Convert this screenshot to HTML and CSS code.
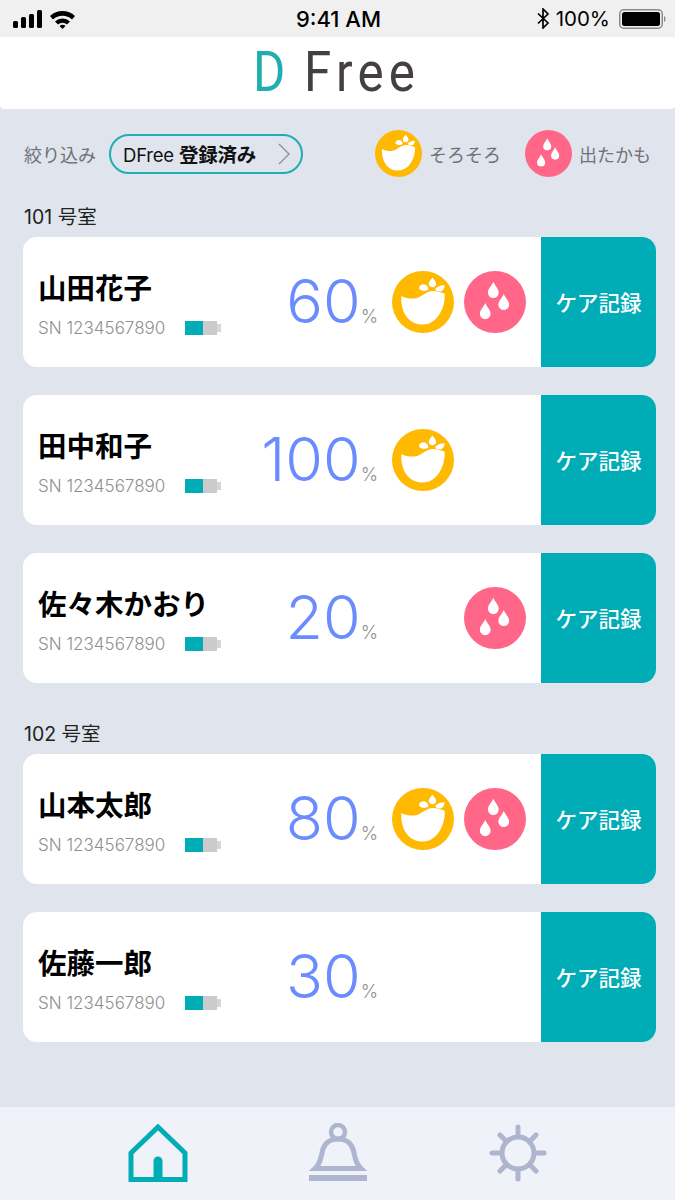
FILE: index.html
```html
<!DOCTYPE html>
<html lang="ja">
<head>
    <meta charset="utf-8">
    <title>DFree</title>
    <link rel="stylesheet" href="styles.css">
</head>
<body>

<svg class="defs" width="0" height="0">
    <symbol id="icon-soon" viewBox="-92 -92 184 184">
        <circle r="92" fill="#ffb900"/>
        <path fill="#fff" d="M-64,-18 C-50,-10 -35,-9 -21,-11 C-5,-14 10,-33 29,-33 C42,-33 54,-28 64,-25 C68,10 45,67 0,67 C-45,67 -68,25 -64,-18Z"/>
        <path fill="#fff" d="M28,-73 C33,-66 40,-60 39,-52 C37,-41 19,-41 17,-52 C16,-60 23,-66 28,-73Z"/>
        <path fill="#fff" d="M-12,-40 C-12,-50 -2,-54 6,-52 C12,-50 16,-44 16,-37 C10,-33 -4,-30 -12,-40Z"/>
        <path fill="#fff" d="M64,-50 C54,-50 40,-46 36,-38 C39,-32 50,-29 56,-33 C62,-37 64,-44 64,-50Z"/>
    </symbol>
    <symbol id="drop" viewBox="-17 -25 34 50">
        <path fill="#fff" d="M0,-24 C5,-12 16,-3 16,8 A16,16 0 0 1 -16,8 C-16,-3 -5,-12 0,-24Z"/>
    </symbol>
    <symbol id="icon-wet" viewBox="-92 -92 184 184">
        <circle r="92" fill="#ff6688"/>
        <use href="#drop" x="-22" y="-61" width="34" height="50"/>
        <use href="#drop" x="9" y="-25" width="34" height="50"/>
        <use href="#drop" x="-46" y="2" width="34" height="50"/>
    </symbol>
    <symbol id="battery" viewBox="0 0 36 14">
        <rect x="18" width="14" height="14" fill="#cbcbcb"/>
        <rect x="32" y="3" width="4" height="8" fill="#d6d6d6"/>
        <rect width="18" height="14" fill="#00acb6"/>
    </symbol>
</svg>

<div class="status-bar">
    <div class="status-left">
        <svg width="62" height="20" viewBox="0 0 62 20">
            <rect x="0" y="12" width="5" height="7" rx="1.5"/>
            <rect x="8" y="8" width="5" height="11" rx="1.5"/>
            <rect x="16" y="5" width="5" height="14" rx="1.5"/>
            <rect x="24" y="1" width="5" height="18" rx="1.5"/>
            <path d="M37,7 A18,18 0 0 1 62,7 L59,10.5 A14,14 0 0 0 40,10.5Z"/>
            <path d="M42,12.5 A11,11 0 0 1 57,12.5 L54,15.5 A7,7 0 0 0 45,15.5Z"/>
            <path d="M46.500,17 A4.500,4.500 0 0 1 52.500,17 L49.500,20Z"/>
        </svg>
    </div>
    <div class="status-time">9:41 AM</div>
    <div class="status-right">
        <svg width="13" height="21" viewBox="0 0 13 21" class="bt">
            <path d="M1,5.500 L11,15 L6,20 L6,1 L11,6 L1,15.500" fill="none" stroke="#000" stroke-width="1.700"/>
        </svg>
        <span class="status-pct">100%</span>
        <svg width="48" height="20" viewBox="0 0 48 20">
            <rect x="0.750" y="0.750" width="42.500" height="18.500" rx="4" fill="none" stroke="#8a8a8a" stroke-width="1.500"/>
            <rect x="3" y="3" width="38" height="14" rx="2.500" fill="#000"/>
            <path d="M45,7 C47,7.500 47,12.500 45,13Z" fill="#8a8a8a"/>
        </svg>
    </div>
</div>

<header class="app-header">
    <span class="logo-d">D</span>
    <span class="logo-free">Free</span>
</header>

<div class="filter-row">
    <span class="filter-label">絞り込み</span>
    <div class="filter-pill">
        <span>DFree <b>登録済み</b></span>
        <svg width="12" height="22" viewBox="0 0 12 22">
            <path d="M1,1 L11,11 L1,21" fill="none" stroke="#8d8d8d" stroke-width="1.300"/>
        </svg>
    </div>
    <div class="legend">
        <div class="legend-item">
            <svg class="legend-icon"><use href="#icon-soon"/></svg>
            <span>そろそろ</span>
        </div>
        <div class="legend-item">
            <svg class="legend-icon"><use href="#icon-wet"/></svg>
            <span>出たかも</span>
        </div>
    </div>
</div>

<main class="rooms">
    <section class="room">
        <h2>101 号室</h2>
        <div class="card">
            <div class="person">
                <div class="name">山田花子</div>
                <div class="serial">SN 1234567890 <svg class="batt"><use href="#battery"/></svg></div>
            </div>
            <div class="level"><span class="num">60</span><span class="unit">%</span></div>
            <div class="alerts">
                <svg class="alert"><use href="#icon-soon"/></svg>
                <svg class="alert"><use href="#icon-wet"/></svg>
            </div>
            <button class="care">ケア記録</button>
        </div>
        <div class="card">
            <div class="person">
                <div class="name">田中和子</div>
                <div class="serial">SN 1234567890 <svg class="batt"><use href="#battery"/></svg></div>
            </div>
            <div class="level"><span class="num">100</span><span class="unit">%</span></div>
            <div class="alerts">
                <svg class="alert"><use href="#icon-soon"/></svg>
                <div class="alert"></div>
            </div>
            <button class="care">ケア記録</button>
        </div>
        <div class="card">
            <div class="person">
                <div class="name">佐々木かおり</div>
                <div class="serial">SN 1234567890 <svg class="batt"><use href="#battery"/></svg></div>
            </div>
            <div class="level"><span class="num">20</span><span class="unit">%</span></div>
            <div class="alerts">
                <div class="alert"></div>
                <svg class="alert"><use href="#icon-wet"/></svg>
            </div>
            <button class="care">ケア記録</button>
        </div>
    </section>

    <section class="room">
        <h2>102 号室</h2>
        <div class="card">
            <div class="person">
                <div class="name">山本太郎</div>
                <div class="serial">SN 1234567890 <svg class="batt"><use href="#battery"/></svg></div>
            </div>
            <div class="level"><span class="num">80</span><span class="unit">%</span></div>
            <div class="alerts">
                <svg class="alert"><use href="#icon-soon"/></svg>
                <svg class="alert"><use href="#icon-wet"/></svg>
            </div>
            <button class="care">ケア記録</button>
        </div>
        <div class="card">
            <div class="person">
                <div class="name">佐藤一郎</div>
                <div class="serial">SN 1234567890 <svg class="batt"><use href="#battery"/></svg></div>
            </div>
            <div class="level"><span class="num">30</span><span class="unit">%</span></div>
            <div class="alerts">
                <div class="alert"></div>
                <div class="alert"></div>
            </div>
            <button class="care">ケア記録</button>
        </div>
    </section>
</main>

<nav class="tab-bar">
    <svg width="60" height="58" viewBox="0 0 60 58">
        <path d="M30,3 L57,29 L57,55.500 L3,55.500 L3,29Z" fill="none" stroke="#00acb6" stroke-width="5"/>
        <path d="M30,37 L30,55" fill="none" stroke="#00acb6" stroke-width="9" stroke-linecap="round"/>
    </svg>
    <svg class="tab-bell" width="60" height="60" viewBox="0 0 60 60">
        <circle cx="29" cy="9" r="7" fill="none" stroke="#adb5cf" stroke-width="4.500"/>
        <path d="M6,45.500 C13,39 12,31 14,26 C17,18 22,16 29,16 C36,16 41,18 44,26 C46,31 45,39 52,45.500Z" fill="none" stroke="#adb5cf" stroke-width="5"/>
        <rect x="0" y="52" width="58" height="6" fill="#adb5cf"/>
    </svg>
    <svg width="58" height="58" viewBox="-29 -29 58 58">
        <circle r="16" fill="none" stroke="#adb5cf" stroke-width="5"/>
        <path d="M0,-26 V-18 M0,26 V18 M-26,0 H-18 M26,0 H18 M-18,-18 L-13,-13 M18,-18 L13,-13 M-18,18 L-13,13 M18,18 L13,13" fill="none" stroke="#adb5cf" stroke-width="5" stroke-linecap="round"/>
    </svg>
</nav>

</body>
</html>
```

FILE: styles.css
```css
* {
    box-sizing: border-box;
}

html, body {
    margin: 0;
    height: 1200px;
}

body {
    display: flex;
    flex-direction: column;
    background-color: #dfe4ed;
    font-family: "Noto Sans", "Noto Sans CJK JP", sans-serif;
    color: #000;
    overflow: hidden;
}

.defs {
    position: absolute;
}

.status-bar {
    height: 37px;
    background-color: #f0f0f0;
    display: grid;
    grid-template-columns: 1fr auto 1fr;
    align-items: center;
    padding: 0 8px 0 13px;
}

.status-left {
    display: flex;
}

.status-time {
    font-family: "Inter", sans-serif;
    font-size: 22px;
    font-weight: 500;
    margin-left: -3px;
}

.status-right {
    display: flex;
    align-items: center;
    justify-content: flex-end;
    gap: 6px;
}

.status-pct {
    font-family: "Inter", sans-serif;
    font-size: 20.500px;
    margin-right: 3px;
}

.app-header {
    height: 72px;
    background-color: #fff;
    border-radius: 0 0 4px 4px;
    display: flex;
    justify-content: center;
    align-items: center;
    gap: 21px;
    padding: 0 8px 2px 0;
    font-family: "Roboto", sans-serif;
    font-weight: 400;
    font-size: 56px;
    line-height: 1;
}

.logo-d {
    color: #1eaeb0;
    width: 30px;
    transform: scaleX(0.880);
    transform-origin: left center;
}

.logo-free {
    color: #443f40;
    width: 110px;
    letter-spacing: 6px;
    white-space: nowrap;
    transform: scaleX(0.880);
    transform-origin: left center;
}

.filter-row {
    height: 89px;
    padding: 0 24px 0 24px;
    display: flex;
    align-items: center;
    font-size: 18px;
    color: #6f7276;
}

.filter-label {
    margin-right: 13px;
    white-space: nowrap;
}

.filter-pill {
    width: 194px;
    height: 40px;
    border: 2px solid #1eaeb4;
    border-radius: 20px;
    display: flex;
    align-items: center;
    justify-content: space-between;
    padding: 0 11px 0 12px;
    color: #111;
    font-size: 18.500px;
    letter-spacing: -0.200px;
    font-family: "Inter", "Noto Sans CJK JP", sans-serif;
}

.filter-pill b {
    font-family: "Noto Sans CJK JP", sans-serif;
    font-weight: 700;
    font-size: 19.500px;
}

.legend {
    margin-left: auto;
    display: flex;
    gap: 24px;
}

.legend-item {
    display: flex;
    align-items: center;
    gap: 7px;
}

.legend-icon {
    width: 47px;
    height: 47px;
}

.rooms {
    flex: 1;
    padding: 0 19px 0 23px;
}

.room {
    margin-bottom: 32px;
}

.room h2 {
    margin: 0;
    height: 39px;
    padding: 7px 0 0 1px;
    font-family: "Inter", "Noto Sans CJK JP", sans-serif;
    font-size: 19.500px;
    line-height: 24px;
    font-weight: 400;
    color: #222;
}

.card {
    height: 130px;
    margin-bottom: 28px;
    background-color: #fff;
    border-radius: 14px;
    overflow: hidden;
    display: flex;
    align-items: center;
}

.card:last-child {
    margin-bottom: 0;
}

.person {
    width: 220px;
    padding: 3px 0 0 15px;
    white-space: nowrap;
}

.name {
    font-size: 28.500px;
    font-weight: 700;
    line-height: 40px;
    font-family: "Noto Sans CJK JP", sans-serif;
}

.serial {
    margin-top: 9px;
    font-family: "Inter", sans-serif;
    font-weight: 300;
    font-size: 17px;
    line-height: 24px;
    color: #8f8f8f;
    display: flex;
    align-items: center;
}

.batt {
    width: 36px;
    height: 14px;
    margin-left: 20px;
}

.level {
    flex: 1;
    display: flex;
    justify-content: flex-end;
    align-items: baseline;
    padding-bottom: 2px;
    font-family: "Inter", sans-serif;
}

.num {
    font-size: 61px;
    font-weight: 270;
    line-height: 1;
    color: #6a8cff;
}

.unit {
    font-size: 18.500px;
    font-weight: 300;
    color: #8f8f8f;
    margin-left: 0;
}

.alerts {
    display: flex;
    gap: 10px;
    margin: 0 15px 0 14px;
}

.alert {
    width: 62px;
    height: 62px;
}

.care {
    width: 115px;
    height: 100%;
    border: none;
    padding: 0 0 2px;
    background-color: #00acb6;
    color: #fff;
    font-family: "Noto Sans CJK JP", sans-serif;
    font-size: 21.500px;
    font-weight: 500;
}

.tab-bar {
    height: 93px;
    background-color: #eff2f8;
    display: flex;
    justify-content: space-between;
    align-items: center;
    padding: 0 128px 2px 128px;
}

.tab-bell {
    margin-left: 1px;
}
```
